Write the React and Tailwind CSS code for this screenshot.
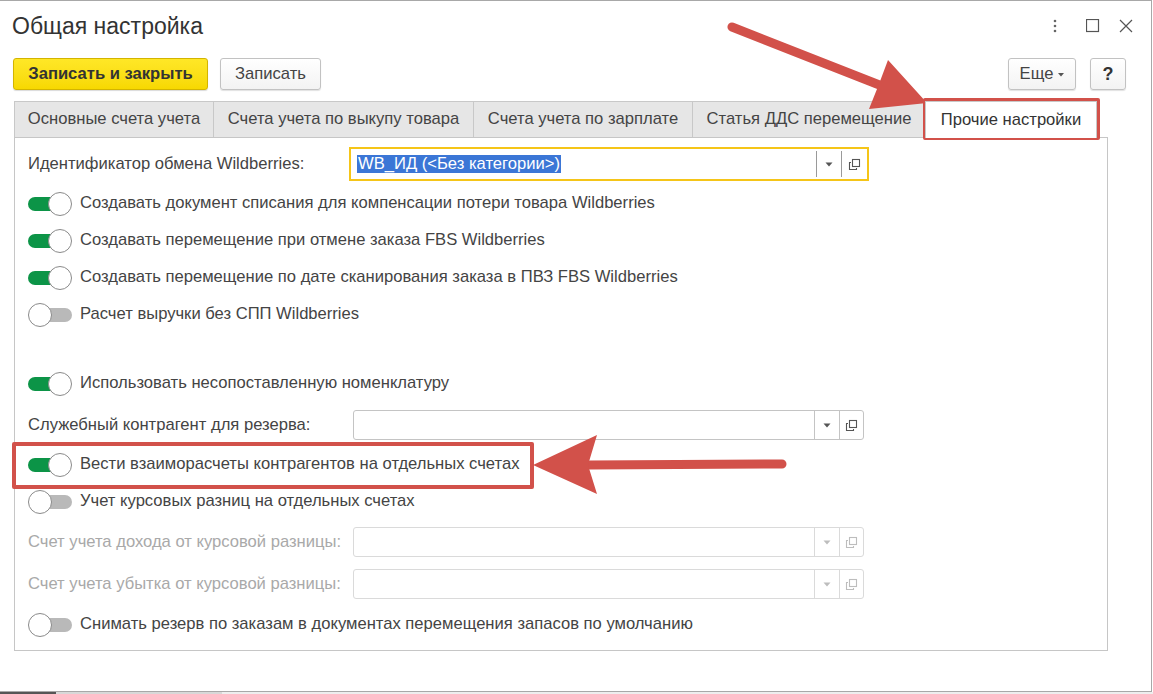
import React from "react";

function Toggle({ on }) {
  return (
    <div className="relative w-[44px] h-[24px] shrink-0">
      {on ? (
        <div className="absolute left-0 top-[5px] h-[14px] w-[36px] rounded-full bg-[#0c9447]" />
      ) : (
        <div className="absolute left-[10px] top-[5px] h-[14px] w-[34px] rounded-full bg-[#b9b9b9]" />
      )}
      <div
        className={
          on
            ? "absolute top-0 left-[20px] w-[24px] h-[24px] rounded-full bg-white border border-[#8a8a8a]"
            : "absolute top-0 left-0 w-[24px] h-[24px] rounded-full bg-white border border-[#8a8a8a]"
        }
      />
    </div>
  );
}

function Arrow({ color }) {
  return (
    <svg width="8" height="5" viewBox="0 0 8 5">
      <polygon points="0.5,0.5 7.5,0.5 4,4.5" fill={color} />
    </svg>
  );
}

function CopyIcon({ color }) {
  return (
    <svg width="13" height="13" viewBox="0 0 13 13" fill="none" stroke={color} strokeWidth="1.1">
      <rect x="4.5" y="1.5" width="7" height="7" />
      <path d="M3 4.5 H1.5 V11.5 H8.5 V10" />
    </svg>
  );
}

function Field({ disabled }) {
  const border = disabled ? "border-[#dadada]" : "border-[#c4c4c4]";
  const icon = disabled ? "#bdbdbd" : "#555555";
  return (
    <div className={`flex h-[30px] w-[511px] border ${border} rounded-[3px] bg-white`}>
      <div className="flex-1" />
      <div className={`w-[25px] border-l ${border} flex items-center justify-center`}>
        <Arrow color={icon} />
      </div>
      <div className={`w-[24px] border-l ${border} flex items-center justify-center`}>
        <CopyIcon color={icon} />
      </div>
    </div>
  );
}

function ToggleRow({ on, text, className = "" }) {
  return (
    <div className={`flex items-center h-[37px] ${className}`}>
      <Toggle on={on} />
      <span className="ml-[8px] text-[16.6px] text-[#444444] whitespace-nowrap">{text}</span>
    </div>
  );
}

export default function App() {
  const tabs = [
    { t: "Основные счета учета", w: "w-[199px]" },
    { t: "Счета учета по выкупу товара", w: "w-[260px]" },
    { t: "Счета учета по зарплате", w: "w-[219px]" },
    { t: "Статья ДДС перемещение", w: "w-[233px]" },
  ];
  return (
    <div className="relative w-[1153px] h-[694px] overflow-hidden bg-white font-['Liberation_Sans',Arial,sans-serif]">
      <div className="w-[1152px] h-[692px] border-t border-r border-b border-[#a8a8a8] flex flex-col">
        {/* title bar */}
        <div className="flex items-start">
          <div className="pl-[12px] pt-[12px] text-[23px] leading-[26px] text-[#333333]">Общая настройка</div>
          <div className="ml-auto flex items-center pt-[18px]">
            <svg width="4" height="14" viewBox="0 0 4 14" className="mr-[29px]">
              <circle cx="2" cy="2" r="1.3" fill="#666" />
              <circle cx="2" cy="7" r="1.3" fill="#666" />
              <circle cx="2" cy="12" r="1.3" fill="#666" />
            </svg>
            <svg width="14" height="14" viewBox="0 0 14 14" className="mr-[19px]">
              <rect x="0.5" y="0.5" width="12" height="12" fill="none" stroke="#555" strokeWidth="1.2" />
            </svg>
            <svg width="14" height="14" viewBox="0 0 14 14" className="mr-[18px]">
              <path d="M1 1 L13 13 M13 1 L1 13" stroke="#555" strokeWidth="1.2" />
            </svg>
          </div>
        </div>

        {/* command bar */}
        <div className="flex items-center mt-[19px] pl-[13px] pr-[25px]">
          <div className="h-[32px] w-[195px] flex items-center justify-center rounded-[3px] border border-[#d3b400] bg-gradient-to-b from-[#ffe726] to-[#f7d800] shadow-[0_1px_1px_rgba(0,0,0,0.15)] text-[16.6px] font-bold text-[#333333] whitespace-nowrap">
            Записать и закрыть
          </div>
          <div className="ml-[12px] h-[32px] w-[101px] flex items-center justify-center rounded-[3px] border border-[#c2c2c2] bg-gradient-to-b from-white to-[#f3f3f3] shadow-[0_1px_1px_rgba(0,0,0,0.12)] text-[16.6px] text-[#444444]">
            Записать
          </div>
          <div className="ml-auto h-[32px] w-[68px] flex items-center justify-center rounded-[3px] border border-[#c2c2c2] bg-gradient-to-b from-white to-[#f3f3f3] shadow-[0_1px_1px_rgba(0,0,0,0.12)] text-[16.6px] text-[#444444]">
            Еще
            <svg width="6" height="4" viewBox="0 0 6 4" className="ml-[5px] mt-[2px]">
              <polygon points="0,0 6,0 3,3.5" fill="#555" />
            </svg>
          </div>
          <div className="ml-[14px] h-[32px] w-[36px] flex items-center justify-center rounded-[3px] border border-[#c2c2c2] bg-gradient-to-b from-white to-[#f3f3f3] shadow-[0_1px_1px_rgba(0,0,0,0.12)] text-[18px] font-bold text-[#333333]">
            ?
          </div>
        </div>

        {/* tabs + panel */}
        <div className="mt-[11px] ml-[14px] w-[1094px]">
          <div className="flex h-[36px]">
            {tabs.map((tab, i) => (
              <div
                key={i}
                className={`${tab.w} h-[36px] flex items-center justify-center bg-[#e6e6e6] border-t border-l border-[#c8c8c8] text-[16.6px] text-[#444444] whitespace-nowrap`}
              >
                {tab.t}
              </div>
            ))}
            <div className="relative z-10 w-[172px] h-[37px] flex items-center justify-center bg-white border-t border-l border-r border-[#c8c8c8] text-[16.6px] text-[#333333] whitespace-nowrap">
              Прочие настройки
            </div>
          </div>
          <div className="h-[514px] border border-[#c6c6c6] pt-[9px] pl-[13px] flex flex-col">
            {/* identifier row */}
            <div className="flex items-center h-[34px]">
              <div className="w-[321px] text-[16.6px] text-[#444444] whitespace-nowrap">Идентификатор обмена Wildberries:</div>
              <div className="flex h-[34px] w-[520px] border-2 border-[#f5c518] bg-white">
                <div className="flex-1 flex items-center pl-[6px]">
                  <span className="bg-[#3b76d6] text-white text-[16.6px] leading-[18px] px-[1px] whitespace-nowrap">WB_ИД (&lt;Без категории&gt;)</span>
                </div>
                <div className="w-[25px] my-[2px] border-l border-[#9a9a9a] flex items-center justify-center">
                  <Arrow color="#555555" />
                </div>
                <div className="w-[26px] my-[2px] border-l border-[#9a9a9a] flex items-center justify-center">
                  <CopyIcon color="#555555" />
                </div>
              </div>
            </div>
            <ToggleRow on text="Создавать документ списания для компенсации потери товара Wildberries" className="mt-[4px]" />
            <ToggleRow on text="Создавать перемещение при отмене заказа FBS Wildberries" />
            <ToggleRow on text="Создавать перемещение по дате сканирования заказа в ПВЗ FBS Wildberries" />
            <ToggleRow on={false} text="Расчет выручки без СПП Wildberries" />
            <ToggleRow on text="Использовать несопоставленную номенклатуру" className="mt-[32px]" />
            <div className="flex items-center h-[30px] mt-[8px]">
              <div className="w-[325px] text-[16.6px] text-[#444444] whitespace-nowrap">Служебный контрагент для резерва:</div>
              <Field />
            </div>
            <ToggleRow on text="Вести взаиморасчеты контрагентов на отдельных счетах" className="mt-[6px]" />
            <ToggleRow on={false} text="Учет курсовых разниц на отдельных счетах" />
            <div className="flex items-center h-[30px] mt-[7px]">
              <div className="w-[325px] text-[16.6px] text-[#a9a9a9] whitespace-nowrap">Счет учета дохода от курсовой разницы:</div>
              <Field disabled />
            </div>
            <div className="flex items-center h-[30px] mt-[12px]">
              <div className="w-[325px] text-[16.6px] text-[#a9a9a9] whitespace-nowrap">Счет учета убытка от курсовой разницы:</div>
              <Field disabled />
            </div>
            <ToggleRow on={false} text="Снимать резерв по заказам в документах перемещения запасов по умолчанию" className="mt-[7px]" />
          </div>
        </div>
      </div>
      {/* bottom strip */}
      <div className="flex h-[2px]">
        <div className="w-[56px] bg-[#555555]" />
        <div className="w-[166px] bg-[#d8d8d8]" />
        <div className="flex-1 bg-[#eeeeee]" />
      </div>

      {/* annotations */}
      <div className="absolute left-[923px] top-[98px] w-[177px] h-[42px] border-[4px] border-[#d2514a] rounded-[2px] pointer-events-none" />
      <div className="absolute left-[12px] top-[442px] w-[522px] h-[47px] border-[4px] border-[#d2514a] rounded-[2px] pointer-events-none" />
      <svg className="absolute left-0 top-0 pointer-events-none" width="1153" height="694" viewBox="0 0 1153 694">
        <line x1="732" y1="27" x2="882" y2="86" stroke="#d2514a" strokeWidth="9" strokeLinecap="round" />
        <polygon points="888,60 879,84 869,109 927,103" fill="#d2514a" />
        <line x1="782" y1="464" x2="590" y2="465" stroke="#d2514a" strokeWidth="9" strokeLinecap="round" />
        <polygon points="597,435 588,465 597,494 533,465" fill="#d2514a" />
      </svg>
    </div>
  );
}
